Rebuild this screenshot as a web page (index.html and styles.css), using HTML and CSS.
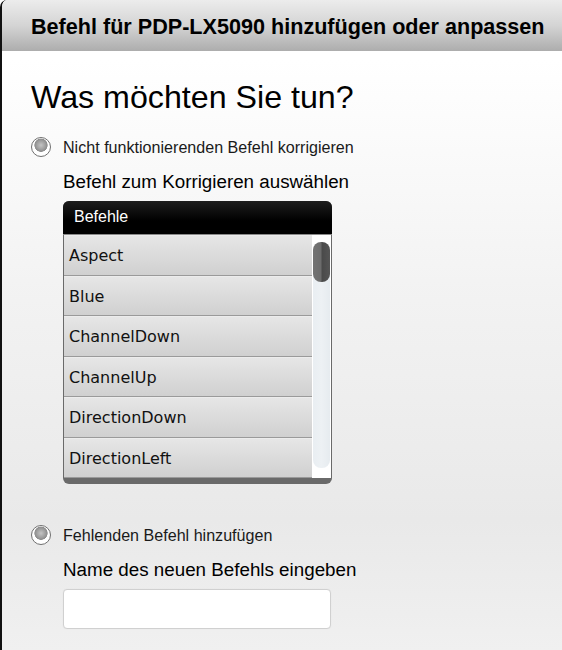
FILE: index.html
```html
<!DOCTYPE html>
<html>
<head>
<meta charset="utf-8">
<link rel="stylesheet" href="styles.css">
</head>
<body>
<div class="window">
  <div class="titlebar">Befehl für PDP-LX5090 hinzufügen oder anpassen</div>
  <div class="content">
    <h1 class="question">Was möchten Sie tun?</h1>
    <div class="option">
      <span class="radio"></span>
      <span class="option-label">Nicht funktionierenden Befehl korrigieren</span>
    </div>
    <div class="sub">
      <div class="sub-label">Befehl zum Korrigieren auswählen</div>
      <div class="listbox">
        <div class="list-head">Befehle</div>
        <div class="list-body">
          <div class="rows">
            <div class="row">Aspect</div>
            <div class="row">Blue</div>
            <div class="row">ChannelDown</div>
            <div class="row">ChannelUp</div>
            <div class="row">DirectionDown</div>
            <div class="row">DirectionLeft</div>
          </div>
          <div class="scroll">
            <div class="thumb"></div>
          </div>
        </div>
      </div>
    </div>
    <div class="option option-2">
      <span class="radio"></span>
      <span class="option-label">Fehlenden Befehl hinzufügen</span>
    </div>
    <div class="sub">
      <div class="sub-label">Name des neuen Befehls eingeben</div>
      <div class="textbox"></div>
    </div>
  </div>
</div>
</body>
</html>
```
FILE: styles.css
```css
html, body {
  margin: 0;
  padding: 0;
  width: 562px;
  height: 650px;
  overflow: hidden;
  background: #fff;
}
.window {
  height: 650px;
  border-left: 2px solid #111;
  border-top-left-radius: 7px;
  background: linear-gradient(#ffffff 0px, #ffffff 60px, #f2f2f2 300px, #e9e9e9 520px, #f0f0f0 650px);
  font-family: "Liberation Sans", Arial, sans-serif;
  color: #000;
  overflow: hidden;
}
.titlebar {
  height: 51px;
  box-sizing: border-box;
  padding: 14px 0 0 29px;
  font-size: 21.6px;
  font-weight: bold;
  background: linear-gradient(#ececec, #d4d4d4 50%, #adadad);
  border-top-left-radius: 5px;
}
.content {
  padding: 0 0 0 29px;
}
.question {
  margin: 0;
  padding-top: 27px;
  font-weight: normal;
  font-size: 32.2px;
  line-height: 38px;
}
.option {
  display: flex;
  align-items: center;
  gap: 12px;
  margin-top: 21px;
  height: 20px;
}
.option-2 {
  margin-top: 41px;
}
.radio {
  flex: none;
  width: 20px;
  height: 20px;
  box-sizing: border-box;
  border-radius: 50%;
  border: 1.5px solid #707070;
  background: radial-gradient(circle at 50% 40%, #c4c4c4 0, #a2a2a2 4px, #8c8c8c 6.3px, #fff 6.9px, #fff 9px);
}
.option-label {
  font-size: 16.1px;
  color: #1a1a1a;
}
.sub {
  padding-left: 32px;
}
.sub-label {
  font-size: 18.8px;
  margin-top: 14px;
  line-height: 22px;
}
.listbox {
  margin-top: 8px;
  width: 269px;
  border-radius: 6px;
  background: #6a6a6a;
  padding-bottom: 6px;
  overflow: hidden;
}
.list-head {
  height: 34px;
  box-sizing: border-box;
  padding: 7px 0 0 11px;
  font-size: 16px;
  color: #fff;
  background: linear-gradient(#1e1e1e, #000 60%);
  border-bottom: 1px solid #8a8a8a;
}
.list-body {
  display: flex;
  margin: 0 1px;
  background: #fff;
  height: 243px;
  overflow: hidden;
}
.rows {
  flex: 1;
}
.row {
  height: 40.5px;
  box-sizing: border-box;
  padding: 10px 0 0 5px;
  font-family: "DejaVu Sans", Verdana, sans-serif;
  font-size: 16px;
  color: #111;
  background: linear-gradient(#e6e6e6, #d0d0d0);
  border-top: 1px solid #ececec;
  border-bottom: 1px solid #9a9a9a;
}
.scroll {
  width: 19px;
  background: #fff;
  position: relative;
  padding: 7px 1px 0 1px;
  box-sizing: border-box;
}
.scroll::before {
  content: "";
  position: absolute;
  left: 1px;
  right: 1px;
  top: 10px;
  bottom: 10px;
  border-radius: 8px;
  background: linear-gradient(90deg, #e9eef2, #edf1f4, #e6ebef);
}
.thumb {
  position: relative;
  height: 40px;
  border-radius: 8px;
  background: linear-gradient(90deg, #737373, #6c6c6c 45%, #4a4a4a 55%, #555);
}
.textbox {
  margin-top: 8px;
  width: 268px;
  height: 40px;
  box-sizing: border-box;
  background: #fff;
  border: 1px solid #d0d0d0;
  border-radius: 4px;
  box-shadow: 0 0 1px #e0e0e0;
}
```
